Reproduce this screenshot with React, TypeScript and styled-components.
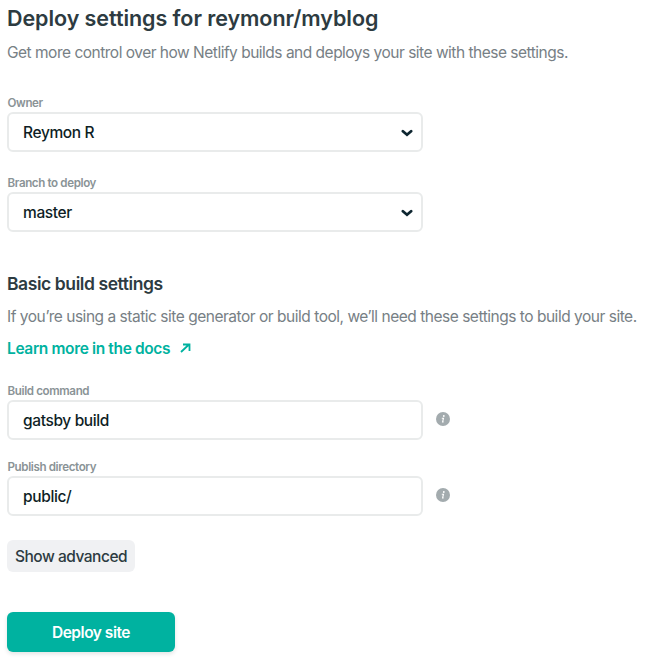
import React from 'react';
import styled, { createGlobalStyle } from 'styled-components';

const Global = createGlobalStyle`
  * { box-sizing: border-box; }
  body { margin: 0; background: #fff; font-family: Inter, "Liberation Sans", sans-serif; color: #0e1e25; }
`;
const Page = styled.main`
  width: 647px; height: 658px; padding: 0 7px; overflow: hidden;
  display: flex; flex-direction: column; align-items: flex-start;
`;
const Title = styled.h1`
  margin: 4px 0 0; font-size: 21.5px; line-height: 28px; font-weight: 600;
  letter-spacing: -0.06px; color: #2d3b41; white-space: nowrap;
`;
const Subtitle = styled.h2`
  margin: 40px 0 0; font-size: 17.5px; line-height: 24px; font-weight: 600;
  letter-spacing: -0.42px; color: #2d3b41; white-space: nowrap;
`;
const Description = styled.p<{ $spacing: number }>`
  margin: 9px 0 -1px; font-size: 15.5px; line-height: 24px; color: #778085;
  letter-spacing: ${p => p.$spacing}px; white-space: nowrap;
`;
const DocsLink = styled.a`
  display: flex; align-items: center; gap: 10px; margin-top: 8px; height: 24px;
  font-size: 15.5px; font-weight: 600; letter-spacing: -0.36px; color: #00b2a0; white-space: nowrap; text-decoration: none;
`;
const Field = styled.div<{ $top: number }>`margin-top: ${p => p.$top}px; display: flex; flex-direction: column;`;
const Label = styled.label`
  font-size: 11.6px; line-height: 16px; font-weight: 600; letter-spacing: -0.38px;
  color: #8a9396; padding-left: 0.5px;
`;
const Row = styled.div`display: flex; align-items: center; gap: 13px;`;
const Control = styled.div`
  width: 416px; height: 40px; margin-top: 1px; padding: 0 8px 0 14px; border: 2px solid #e9ebeb; border-radius: 6px;
  display: flex; align-items: center; justify-content: space-between;
  font-size: 15.5px; font-weight: 500; letter-spacing: -0.37px;
`;
const Button = styled.button<{ $primary?: boolean }>`
  border: 0; padding: 1px 0 0; font: ${p => p.$primary ? 600 : 500} 15.5px/24px Inter, sans-serif;
  letter-spacing: ${p => p.$primary ? -0.48 : -0.48}px;
  width: ${p => p.$primary ? 168 : 128}px; height: ${p => p.$primary ? 40 : 32}px;
  margin-top: ${p => p.$primary ? 40 : 24}px; border-radius: 6px;
  background: ${p => p.$primary ? '#00b2a0' : '#f0f1f3'}; color: ${p => p.$primary ? '#fff' : '#2d3b41'};
  box-shadow: ${p => p.$primary ? '0 2px 4px rgba(14, 30, 37, 0.12)' : 'none'};
`;
const ChevronIcon = styled.svg`display: block; margin-top: 2px;`;
const Chevron = () => (
  <ChevronIcon width="12" height="8" viewBox="0 0 12 8">
    <path d="M1.9 2.2 6 5.7l4.1-3.5" fill="none" stroke="#0e2630" strokeWidth="2.8" strokeLinecap="round" />
  </ChevronIcon>
);
const InfoIcon = styled.svg`display: block; margin-bottom: 1px;`;
const Info = () => (
  <InfoIcon width="14" height="14" viewBox="0 0 14 14">
    <circle cx="7" cy="7" r="7" fill="#a3abae" />
    <circle cx="7.8" cy="4" r="0.9" fill="#fff" />
    <path d="M5.8 6.2h1.7l-0.9 3.7h1" fill="none" stroke="#fff" strokeWidth="1.1" />
  </InfoIcon>
);
const FormField = ({ label, value, top, select }: { label: string; value: string; top: number; select?: boolean }) => (
  <Field $top={top}>
    <Label>{label}</Label>
    <Row>
      <Control><span>{value}</span>{select && <Chevron />}</Control>
      {!select && <Info />}
    </Row>
  </Field>
);

export default function App() {
  return (
    <>
      <Global />
      <Page>
        <Title>Deploy settings for reymonr/myblog</Title>
        <Description $spacing={-0.5}>Get more control over how Netlify builds and deploys your site with these settings.</Description>
        <FormField label="Owner" value="Reymon R" top={31} select />
        <FormField label="Branch to deploy" value="master" top={23} select />
        <Subtitle>Basic build settings</Subtitle>
        <Description $spacing={-0.48}>If you’re using a static site generator or build tool, we’ll need these settings to build your site.</Description>
        <DocsLink>
          Learn more in the docs
          <svg width="11" height="10" viewBox="0 0 11 10"><path d="M1 9 9 1.5M3 1.5h6.5V8" fill="none" stroke="#00b2a0" strokeWidth="1.8" /></svg>
        </DocsLink>
        <FormField label="Build command" value="gatsby build" top={23} />
        <FormField label="Publish directory" value="public/" top={19} />
        <Button>Show advanced</Button>
        <Button $primary>Deploy site</Button>
      </Page>
    </>
  );
}
